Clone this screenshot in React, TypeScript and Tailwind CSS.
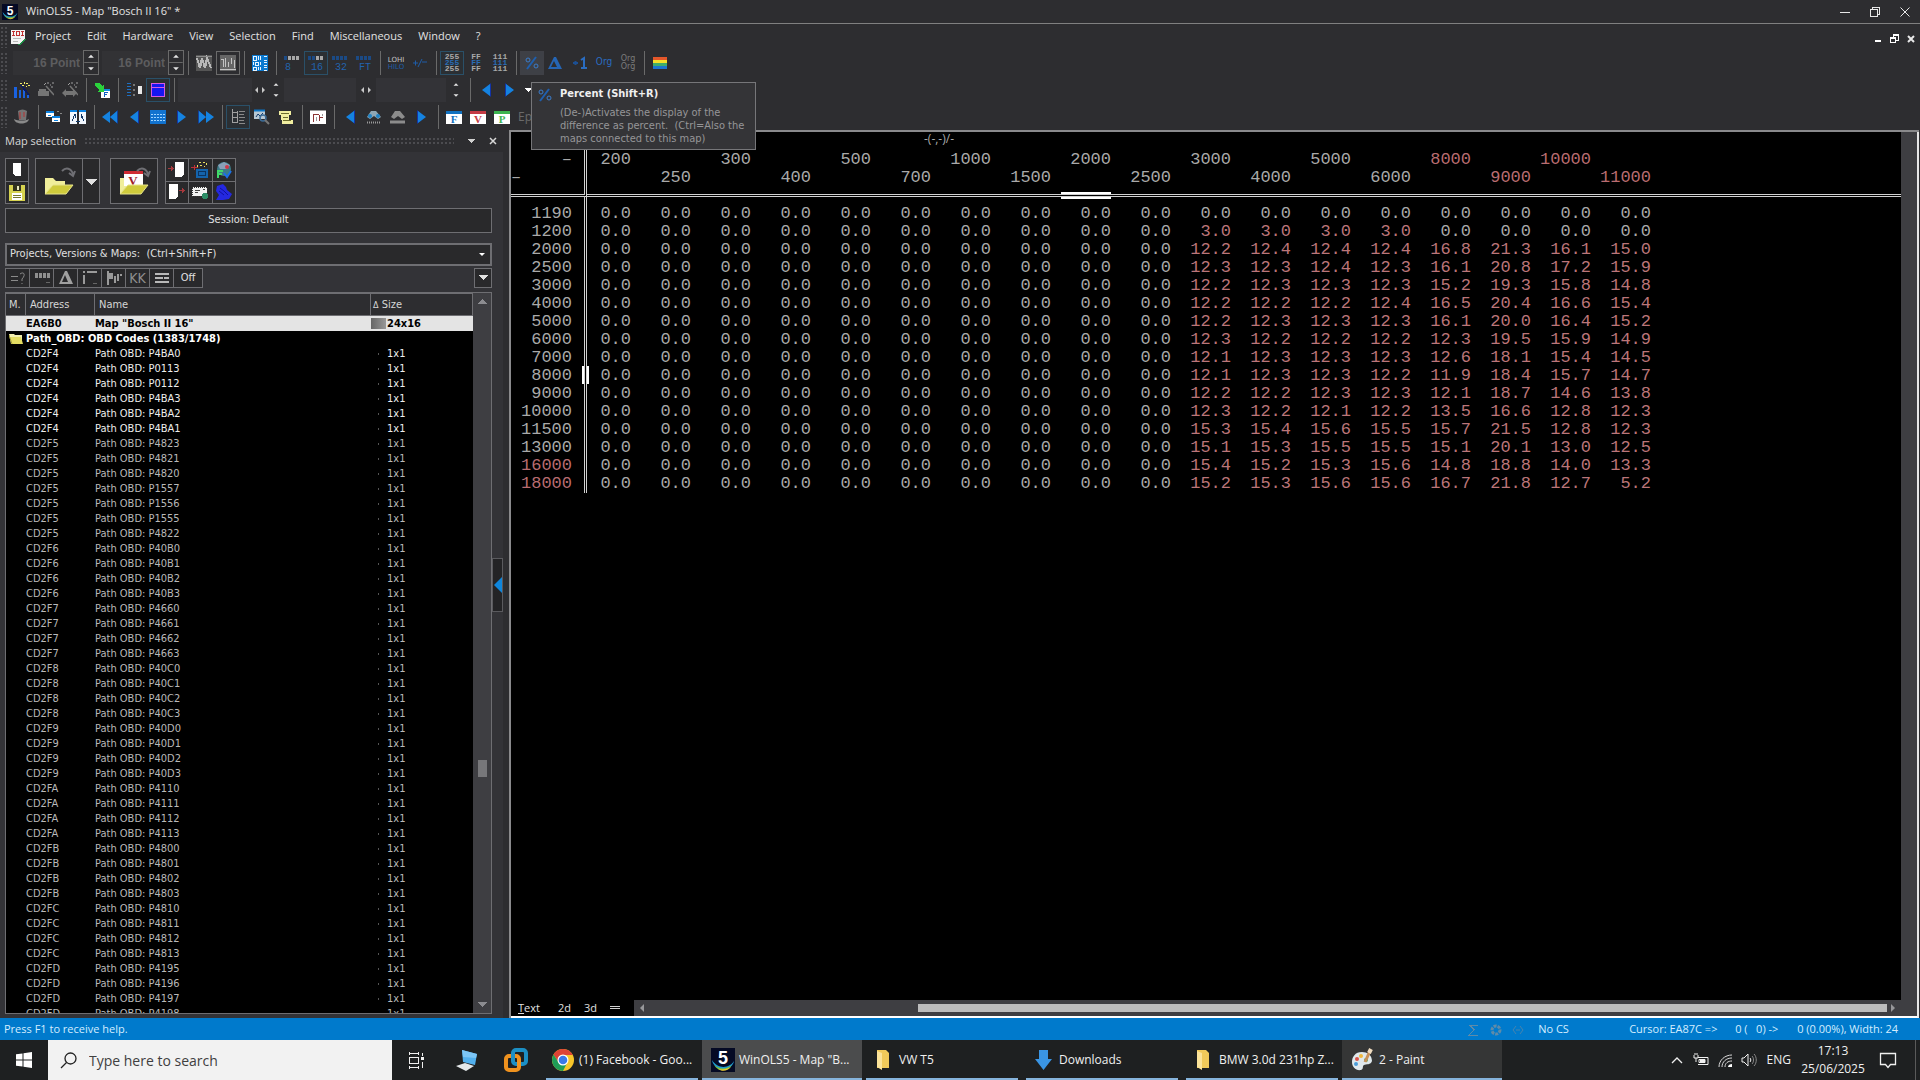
import React from 'react';
import clsx from 'clsx';

const MENU = ['Project', 'Edit', 'Hardware', 'View', 'Selection', 'Find', 'Miscellaneous', 'Window', '?'];

const OBD_GROUPS = [
  { address: 'CD2F4', codes: ['P4BA0', 'P0113', 'P0112', 'P4BA3', 'P4BA2', 'P4BA1'], bright: true },
  { address: 'CD2F5', codes: ['P4823', 'P4821', 'P4820', 'P1557', 'P1556', 'P1555', 'P4822'] },
  { address: 'CD2F6', codes: ['P40B0', 'P40B1', 'P40B2', 'P40B3'] },
  { address: 'CD2F7', codes: ['P4660', 'P4661', 'P4662', 'P4663'] },
  { address: 'CD2F8', codes: ['P40C0', 'P40C1', 'P40C2', 'P40C3'] },
  { address: 'CD2F9', codes: ['P40D0', 'P40D1', 'P40D2', 'P40D3'] },
  { address: 'CD2FA', codes: ['P4110', 'P4111', 'P4112', 'P4113'] },
  { address: 'CD2FB', codes: ['P4800', 'P4801', 'P4802', 'P4803'] },
  { address: 'CD2FC', codes: ['P4810', 'P4811', 'P4812', 'P4813'] },
  { address: 'CD2FD', codes: ['P4195', 'P4196', 'P4197', 'P4198'] },
];

const X_AXIS = [
  200, 250, 300, 400, 500, 700, 1000, 1500, 2000, 2500, 3000, 4000, 5000, 6000, 8000, 9000, 10000, 11000,
];

const Y_AXIS = [
  1190, 1200, 2000, 2500, 3000, 4000, 5000, 6000, 7000, 8000, 9000, 10000, 11500, 13000, 16000, 18000,
];

// the first ten columns have no difference, only the last eight are listed
const DIFF = [
  '0.0 0.0 0.0 0.0 0.0 0.0 0.0 0.0',
  '3.0 3.0 3.0 3.0 0.0 0.0 0.0 0.0',
  '12.2 12.4 12.4 12.4 16.8 21.3 16.1 15.0',
  '12.3 12.3 12.4 12.3 16.1 20.8 17.2 15.9',
  '12.2 12.3 12.3 12.3 15.2 19.3 15.8 14.8',
  '12.2 12.2 12.2 12.4 16.5 20.4 16.6 15.4',
  '12.2 12.3 12.3 12.3 16.1 20.0 16.4 15.2',
  '12.3 12.2 12.2 12.2 12.3 19.5 15.9 14.9',
  '12.1 12.3 12.3 12.3 12.6 18.1 15.4 14.5',
  '12.1 12.3 12.3 12.2 11.9 18.4 15.7 14.7',
  '12.2 12.2 12.3 12.3 12.1 18.7 14.6 13.8',
  '12.3 12.2 12.1 12.2 13.5 16.6 12.8 12.3',
  '15.3 15.4 15.6 15.5 15.7 21.5 12.8 12.3',
  '15.1 15.3 15.5 15.5 15.1 20.1 13.0 12.5',
  '15.4 15.2 15.3 15.6 14.8 18.8 14.0 13.3',
  '15.2 15.3 15.6 15.6 16.7 21.8 12.7 5.2',
].map((row) => [...Array(10).fill('0.0'), ...row.split(' ')]);

const CURSOR_COLUMN = 8;
const CURSOR_ROW = 9;

type IconProps = { children: React.ReactNode; size?: number; box?: number; smooth?: boolean };

const Icon = ({ children, size = 16, box = 16, smooth }: IconProps) => (
  <svg
    width={size}
    height={size}
    viewBox={`0 0 ${box} ${box}`}
    shapeRendering={smooth ? 'auto' : 'crispEdges'}
    fill="none"
    aria-hidden="true"
  >
    {children}
  </svg>
);

const Tool = ({
  label,
  active,
  children,
}: {
  label: string;
  active?: 'blue' | 'gray' | 'hover';
  children: React.ReactNode;
}) => (
  <button
    aria-label={label}
    className={clsx(
      'flex h-6 w-6 shrink-0 items-center justify-center border',
      !active && 'border-transparent',
      active === 'blue' && 'border-[#2a5068] bg-[#2b2f33]',
      active === 'gray' && 'border-[#6b6b6b]',
      active === 'hover' && 'border-[#3f4046] bg-[#3e4046]',
    )}
  >
    {children}
  </button>
);

const Separator = () => (
  <div className="flex w-2 shrink-0 justify-center">
    <div className="h-6 w-px bg-[#6a6a6a]" />
  </div>
);

const ToolbarRow = ({ children, label }: { children: React.ReactNode; label: string }) => (
  <div role="toolbar" aria-label={label} className="flex h-[27px] items-center">
    <Grip className="mr-[2px] h-[22px] w-2" />
    {children}
  </div>
);

const Grip = ({ className }: { className: string }) => (
  <div
    className={clsx(
      'bg-[radial-gradient(#4c4c50_1px,transparent_1px)] bg-[size:4px_4px]',
      className,
    )}
  />
);

const Spinner = ({ boxed }: { boxed?: boolean }) => (
  <svg
    className={clsx('shrink-0', boxed && 'border border-[#6a6a6a]')}
    width="16"
    height={boxed ? 25 : 20}
    viewBox="0 0 14 24"
    aria-hidden="true"
  >
    {boxed && <path d="M0 12h14" stroke="#6a6a6a" />}
    <path d="M7 4l3 3H4zM7 20l3-3H4z" fill="#e4e4e4" />
  </svg>
);

const LeftRight = () => (
  <svg className="shrink-0" width="14" height="10" viewBox="0 0 14 10" aria-hidden="true">
    <path d="M5 2v6L2 5zM9 2v6l3-3z" fill="#c8c8c8" />
  </svg>
);

const Play = ({ back, double }: { back?: boolean; double?: boolean }) => (
  <Icon smooth>
    <g transform={back ? 'translate(16 0) scale(-1 1)' : undefined}>
      {double ? (
        <>
          <path d="M0 1v14l8-7z" fill="#123f9c" />
          <path d="M1 2v12l7-6zM8 2v12l8-6z" fill="#1583e0" />
        </>
      ) : (
        <>
          <path d="M3 1v14l8-7z" fill="#1234a8" />
          <path d="M4 2v12l8-6z" fill="#1583e0" />
        </>
      )}
    </g>
  </Icon>
);

const BitsIcon = ({ text, on }: { text: string; on: number }) => (
  <Icon size={18} box={18}>
    {[0, 1, 2, 3].map((i) => (
      <rect key={i} x={1 + i * 4} y="2" width="3" height="4" fill={i < on ? '#1b4a85' : '#a8a8a8'} />
    ))}
    <text x={text.length > 1 ? 4 : 2} y="16" fontSize="10" fontFamily="Liberation Mono" fill="#2263ae">
      {text}
    </text>
  </Icon>
);

const RadixIcon = ({ lines, middle }: { lines: string; middle: string }) => (
  <Icon size={20} box={20} smooth>
    {[6, 12, 18].map((y, i) => (
      <text
        key={y}
        x="10"
        y={y}
        textAnchor="middle"
        fontSize="8"
        fontWeight="bold"
        fontFamily="Liberation Mono"
        fill={i === 1 ? middle : '#a9a9a9'}
      >
        {lines}
      </text>
    ))}
  </Icon>
);

const LetterIcon = ({ letter, color }: { letter: string; color: string }) => (
  <Icon>
    <rect x="0" y="2" width="16" height="13" fill="#fff" />
    <rect x="0" y="2" width="16" height="3" fill={color} />
    <text x="8" y="14" textAnchor="middle" fontSize="11" fontWeight="bold" fontFamily="Liberation Serif" fill={color}>
      {letter}
    </text>
  </Icon>
);

const WandIcon = ({ color, swap }: { color: string; swap?: boolean }) => (
  <Icon smooth>
    {swap ? (
      <path d="M0 11l4-4v2h7V7l4 4-4 4v-2H4v2z" fill={color} />
    ) : (
      <path d="M0 9h11v5H0zM1 7h7v2H1z" fill={color} />
    )}
    <path d="M8 4l8 9" stroke={color} strokeWidth="1.500" />
    <path d="M6 3l2-2M9 1h2M12 3h1M14 1h2M13 5h2" stroke="#a0a0a0" />
  </Icon>
);

const PercentIcon = () => (
  <Icon smooth>
    <path d="M12 2L3 14" stroke="#1f5fae" strokeWidth="2" />
    <circle cx="4" cy="5" r="2" stroke="#3b7ccb" />
    <circle cx="12" cy="11" r="2" stroke="#3b7ccb" />
  </Icon>
);

const WinOlsIcon = ({ size }: { size: number }) => (
  <Icon size={size} box={24} smooth>
    <rect width="24" height="24" fill="#050a24" />
    <path d="M1 12c2 12 20 12 22 1-4 7-16 9-22-1z" fill="#1f9ad0" />
    <path d="M3 17c4 7 14 7 18 0-5 4-12 5-18 0z" fill="#7fc742" />
    <path d="M7 21c4 3 10 2 13-2-4 2-8 3-13 2z" fill="#f0c832" />
    <text x="12" y="16" textAnchor="middle" fontSize="18" fontWeight="bold" fontFamily="Liberation Sans" fill="#fff">
      5
    </text>
  </Icon>
);

const TitleBar = () => (
  <header className="flex h-6 items-center border-b border-[#808080] bg-[#2d2d30] pr-[10px] pl-[2px]">
    <WinOlsIcon size={16} />
    <h1 className="ml-2 text-[#e2e2e2]">WinOLS5 - Map "Bosch II 16" *</h1>
    <div className="ml-auto flex items-center gap-5">
      <button aria-label="Minimize">
        <Icon size={10} box={10}>
          <path d="M0 5.500h10" stroke="#e8e8e8" />
        </Icon>
      </button>
      <button aria-label="Restore">
        <Icon size={10} box={10}>
          <path d="M.5 2.500h7v7h-7zM2.500 2V.5h7v7H8" stroke="#e8e8e8" />
        </Icon>
      </button>
      <button aria-label="Close">
        <Icon size={10} box={10} smooth>
          <path d="M.5.5l9 9M9.500.5l-9 9" stroke="#e8e8e8" />
        </Icon>
      </button>
    </div>
  </header>
);

const MenuBar = () => (
  <nav className="flex h-[25px] items-center pr-[5px] text-[#e2e2e2]">
    <Grip className="h-[22px] w-2" />
    <div className="mr-[9px] ml-[2px]">
      <Icon>
        <path d="M1 1h14v9l-5 5H1z" fill="#f4f4f4" />
        <path d="M3.500 2v5M2 2.500h3M2 6.500h3M6.500 2.500h3v4h-3zM12.500 2v5M11 2.500h3M11 6.500h3" stroke="#c03030" />
        <path d="M3 9.500h8M3 12.500h5" stroke="#b8b8b8" />
        <path d="M15 9.500v1l-5 5H8" stroke="#1d8b44" />
      </Icon>
    </div>
    <ul className="flex gap-4">
      {MENU.map((item) => (
        <li key={item}>
          <button>{item}</button>
        </li>
      ))}
    </ul>
    <div className="ml-auto flex items-center gap-2 pt-1">
      <button aria-label="Minimize map window">
        <Icon size={8} box={8}>
          <path d="M1 6h6" stroke="#fff" strokeWidth="2" />
        </Icon>
      </button>
      <button aria-label="Restore map window">
        <Icon size={9} box={9}>
          <path d="M.5 4.500h5v4h-5zM3 3V1h5v5H6" stroke="#fff" />
          <path d="M0 4h6M3 1h6" stroke="#fff" strokeWidth="2" />
        </Icon>
      </button>
      <button aria-label="Close map window">
        <Icon size={8} box={8} smooth>
          <path d="M1 1l6 6M7 1L1 7" stroke="#e8e8e8" strokeWidth="2" />
        </Icon>
      </button>
    </div>
  </nav>
);

const pointInput =
  'h-6 min-w-0 shrink-0 bg-[#323235] pr-[3px] text-right font-[Liberation_Sans,sans-serif] text-xs font-bold text-[#5d5d5f]';
const plainInput = 'h-6 min-w-0 shrink-0 bg-[#333337]';

const Toolbars = () => (
  <div className="text-[#8a8a8a]">
    <ToolbarRow label="View">
      <input aria-label="Font size" defaultValue="16 Point" className={clsx(pointInput, 'ml-[3px] w-[70px]')} />
      <Spinner boxed />
      <input aria-label="Axis font size" defaultValue="16 Point" className={clsx(pointInput, 'ml-[3px] w-[66px]')} />
      <Spinner boxed />
      <Separator />
      <Tool label="Signed curve">
        <Icon>
          <rect width="16" height="16" fill="#555" />
          <path d="M1 3l3 10 2-10 3 10 2-10 4 10" stroke="#b9b9b9" strokeWidth="2" />
          <path d="M0 1h16" stroke="#8d8d8d" />
        </Icon>
      </Tool>
      <Tool label="Bar curve" active="gray">
        <Icon>
          <rect width="16" height="16" fill="#666" />
          <path d="M1 4h2v8M5 3v9M8 7v5M11 3v6M14 5v8M0 14h16" stroke="#c4c4c4" />
        </Icon>
      </Tool>
      <Separator />
      <Tool label="Hexdump">
        <Icon>
          <rect width="16" height="16" fill="#0b79cf" />
          <path
            d="M1 1h3v4H1zM6 1v4M8 1v4M1 7v3M3 7h3v3H3zM8 7v3M1 12h3v3H1zM6 12v3M8 12v3M12 1h3M12 5h3M12 7h3M12 10h3M12 12h3M12 15h3"
            stroke="#e8f4ff"
          />
        </Icon>
      </Tool>
      <Separator />
      <Tool label="8 bit"><BitsIcon text="8" on={1} /></Tool>
      <Tool label="16 bit" active="blue"><BitsIcon text="16" on={2} /></Tool>
      <Tool label="32 bit"><BitsIcon text="32" on={4} /></Tool>
      <Tool label="Float"><BitsIcon text="FT" on={4} /></Tool>
      <Separator />
      <Tool label="Low High">
        <Icon size={20} box={20} smooth>
          <text x="10" y="9" textAnchor="middle" fontSize="7" fontFamily="DejaVu Sans" fill="#c4c4c4">LOHI</text>
          <text x="10" y="16" textAnchor="middle" fontSize="7" fontFamily="DejaVu Sans" fill="#1f5da8">HILO</text>
        </Icon>
      </Tool>
      <Tool label="Sign">
        <Icon smooth>
          <path d="M1 8h5M3.500 5.500v5M6 12l4-8M10 7h5" stroke="#1f5da8" />
        </Icon>
      </Tool>
      <Separator />
      <Tool label="Decimal" active="blue"><RadixIcon lines="255" middle="#2a6cb4" /></Tool>
      <Tool label="Hexadecimal"><RadixIcon lines="FF" middle="#2a6cb4" /></Tool>
      <Tool label="Binary"><RadixIcon lines="111" middle="#2a6cb4" /></Tool>
      <Separator />
      <Tool label="Percent" active="hover"><PercentIcon /></Tool>
      <Tool label="Difference">
        <Icon smooth>
          <path d="M6 2h2l6 12H0zM6 6l-3 6h6z" fill="#2565b4" fillRule="evenodd" />
        </Icon>
      </Tool>
      <Tool label="Plus one">
        <Icon smooth>
          <path d="M1 8h5M3.500 6v4" stroke="#1c4f92" strokeWidth="2" />
          <path d="M9 5l3-2v10M9 13h6" stroke="#2a6cc0" strokeWidth="2" />
        </Icon>
      </Tool>
      <Tool label="Original">
        <Icon size={20} box={20} smooth>
          <text x="10" y="12" textAnchor="middle" fontSize="10" fontFamily="DejaVu Sans Condensed" fill="#2a6cc0">Org</text>
        </Icon>
      </Tool>
      <Tool label="Original values">
        <Icon size={18} box={18} smooth>
          <text x="9" y="7" textAnchor="middle" fontSize="8" fontFamily="DejaVu Sans" fill="#7c7c7c">Org</text>
          <text x="9" y="15" textAnchor="middle" fontSize="8" fontFamily="DejaVu Sans" fill="#7c7c7c">Org</text>
        </Icon>
      </Tool>
      <Separator />
      <Tool label="Colors">
        <Icon>
          <path d="M1 3.500h14" stroke="#e4572a" strokeWidth="3" />
          <path d="M1 6.500h14" stroke="#f4e02a" strokeWidth="3" />
          <path d="M1 9.500h14" stroke="#3fae6a" strokeWidth="3" />
          <path d="M1 12.500h14" stroke="#1b76d0" strokeWidth="3" />
        </Icon>
      </Tool>
    </ToolbarRow>

    <ToolbarRow label="Values">
      <Tool label="Map wizard">
        <Icon>
          <path d="M0 5h3v11H0zM5 8h2v8H5zM9 7h2v9H9zM13 11h2v5h-2z" fill="#1a62e0" />
          <path d="M7 3l8 10" stroke="#0c1c60" strokeWidth="2" />
          <path d="M6 1h2v1H6zM10 0h1v2h-1zM8 3h2v1H8zM12 1h2v1h-2zM14 3h2v1h-2zM12 4h1v1h-1z" fill="#f2ec6a" />
        </Icon>
      </Tool>
      <Tool label="Project wizard"><WandIcon color="#757575" /></Tool>
      <Tool label="Version wizard"><WandIcon color="#757575" swap /></Tool>
      <Separator />
      <Tool label="Import file">
        <Icon>
          <rect x="7" y="7" width="9" height="9" fill="#fff" />
          <path d="M7 7.500h9" stroke="#0f8fe0" strokeWidth="2" />
          <path d="M10 10h4M10.500 10v5M10 12h3" stroke="#0f60c0" />
          <path d="M1 1h4l3 3 2-2v8H3l2-2-4-4z" fill="#2bd23c" />
        </Icon>
      </Tool>
      <Separator />
      <Tool label="Columns">
        <Icon>
          <path d="M1 1.500h4M1 4.500h4M1 7.500h4M1 10.500h4M1 13.500h4" stroke="#1f6fc0" />
          <path d="M8 2v2M8 7v2M8 12v2" stroke="#777" strokeWidth="2" />
          <rect x="12" y="4" width="4" height="8" fill="#e8e8e8" />
        </Icon>
      </Tool>
      <Tool label="Window layout" active="blue">
        <Icon>
          <rect x="1.500" y="1.500" width="13" height="13" fill="#1616f0" stroke="#d65ae0" />
          <path d="M1 5.500h14" stroke="#d65ae0" />
        </Icon>
      </Tool>
      <Separator />
      <input aria-label="Column value" className={clsx(plainInput, 'w-[74px]')} />
      <div className="flex w-8 items-center justify-end gap-px">
        <LeftRight />
        <Spinner />
      </div>
      <input aria-label="Row value" className={clsx(plainInput, 'w-[72px]')} />
      <div className="flex w-5 justify-center">
        <LeftRight />
      </div>
      <input aria-label="Cell value" className={clsx(plainInput, 'w-[70px]')} />
      <div className="flex w-5 justify-center">
        <Spinner />
      </div>
      <Separator />
      <Tool label="Previous"><Play back /></Tool>
      <Tool label="Next"><Play /></Tool>
      <Icon size={12} box={12}>
        <path d="M3 4h7L6.500 8z" fill="#fff" />
      </Icon>
    </ToolbarRow>

    <ToolbarRow label="Navigation">
      <Tool label="Expert">
        <Icon smooth>
          <path d="M4 2c3-2 6-2 9 0l-1 9H5z" fill="#757575" />
          <path d="M0 10c1 6 14 6 15 0-4 2-11 2-15 0z" fill="#8a8a8a" />
          <path d="M6 3v7M10 3v5" stroke="#a04848" strokeWidth="1.500" />
        </Icon>
      </Tool>
      <Separator />
      <Tool label="Link windows">
        <Icon>
          <rect x="0" y="2" width="8" height="6" fill="#fff" />
          <rect x="6" y="7" width="8" height="6" fill="#fff" />
          <path d="M0 3h8M6 8h8" stroke="#0c84e4" strokeWidth="2" />
          <path d="M2 6.500h3M8 11.500h4" stroke="#0c84e4" />
          <path d="M11 2.500h2M14 4.500h2" stroke="#888" />
        </Icon>
      </Tool>
      <Tool label="Compare windows">
        <Icon>
          <path d="M0 1h7v14H0zM9 1h7v14H9z" fill="#f2f8ff" />
          <path d="M0 1.500h7M9 1.500h7" stroke="#0c84e4" strokeWidth="2" />
          <path d="M2 12l3-7M5 5v4M14 12l-3-7M11 5v4M6 12h4" stroke="#123a6a" />
        </Icon>
      </Tool>
      <Separator />
      <Tool label="First map"><Play back double /></Tool>
      <Tool label="Previous map"><Play back /></Tool>
      <Tool label="Map list">
        <Icon>
          <rect y="1" width="16" height="14" fill="#1273cf" />
          <path d="M1 5.500h14M1 8.500h14M1 11.500h14" stroke="#9fd4ff" strokeDasharray="2 1" />
        </Icon>
      </Tool>
      <Tool label="Next map"><Play /></Tool>
      <Tool label="Last map"><Play double /></Tool>
      <Separator />
      <Tool label="Tree" active="blue">
        <Icon>
          <path d="M2.500 0v13M2 3.500h5M2 8.500h5M2 13.500h5M7.500 2v12" stroke="#a0a0a0" />
          <path d="M9 2.500h6M9 5.500h5M9 8.500h6M9 11.500h5M9 14.500h6" stroke="#8a8a8a" />
        </Icon>
      </Tool>
      <Tool label="Preview">
        <Icon smooth>
          <path d="M0 1h11v9H0z" fill="#b8c8d4" />
          <path d="M0 1.500h11" stroke="#0c74c4" strokeWidth="2" />
          <path d="M2 8l2-3 2 2 3-3" stroke="#123a6a" />
          <circle cx="9" cy="9" r="3" stroke="#3c6c98" strokeWidth="1.500" />
          <path d="M11 11l4 4" stroke="#777" strokeWidth="2" />
        </Icon>
      </Tool>
      <Tool label="Notes">
        <Icon>
          <path d="M1 2h12v4h-2v5h4v4H4v-4H3V6H1z" fill="#f1eea0" />
          <path d="M3 4.500h8M5 8.500h5M5 11.500h8" stroke="#6c6c2c" />
        </Icon>
      </Tool>
      <Separator />
      <Tool label="Axis table">
        <Icon>
          <rect x="0" y="1" width="16" height="14" fill="#fff" />
          <path d="M0 1.500h16" stroke="#999" />
          <path d="M3.500 5v8M3 5.500h6M9.500 6v6M9 8.500h4" stroke="#8c3434" />
          <path d="M6.500 8v4M12.500 5v2" stroke="#999" />
        </Icon>
      </Tool>
      <Separator />
      <Tool label="Find previous"><Play back /></Tool>
      <Tool label="Find">
        <Icon smooth>
          <path d="M1 8l4-6h5l5 6-3 2-4-3-4 3z" fill="#8fa6b4" />
          <circle cx="4" cy="7" r="2" fill="#1e82c4" />
          <circle cx="12" cy="7" r="2" fill="#1e82c4" />
          <path d="M1 13.500h14" stroke="#9a9a9a" strokeWidth="2" strokeDasharray="1 1" />
        </Icon>
      </Tool>
      <Tool label="Find maps">
        <Icon smooth>
          <path d="M1 8l4-6h5l5 6-3 2-4-3-4 3z" fill="#8c8c8c" />
          <path d="M0 13h15" stroke="#8c8c8c" strokeWidth="3" />
        </Icon>
      </Tool>
      <Tool label="Find next"><Play /></Tool>
      <Separator />
      <Tool label="Folder"><LetterIcon letter="F" color="#1272c0" /></Tool>
      <Tool label="Version"><LetterIcon letter="V" color="#c43a44" /></Tool>
      <Tool label="Project"><LetterIcon letter="P" color="#3cb450" /></Tool>
      <button className="ml-1 text-xs text-[#6a6a6a]">Epk</button>
    </ToolbarRow>
  </div>
);

const Tooltip = () => (
  <div
    role="tooltip"
    className="absolute top-[82px] left-[531px] z-10 flex w-[225px] gap-[7px] border border-[#767679] bg-[#343437] py-1 pl-[5px]"
  >
    <div className="shrink-0">
      <PercentIcon />
    </div>
    <div className="w-[190px] font-[DejaVu_Sans_Condensed,sans-serif] whitespace-nowrap text-[#969698]">
      <p className="leading-[14px] font-bold text-[#f0f0f0]">Percent (Shift+R)</p>
      <p className="pt-[5px] leading-[13px]">
        (De-)Activates the display of the
        <br />
        difference as percent.&nbsp; (Ctrl=Also the
        <br />
        maps connected to this map)
      </p>
    </div>
  </div>
);

const panelButton = 'flex items-center justify-center border border-[#6e6e72] bg-[#29292b]';

const FolderDrawing = ({ version }: { version?: boolean }) => (
  <Icon size={36} box={36} smooth>
    <path d="M4 15h8l3 3h9v5L12 31H4z" fill="#f0ee9a" />
    {version && (
      <>
        <path d="M8 9h19v14H8z" fill="#fff" />
        <path d="M8 9.500h19" stroke="#d02c34" strokeWidth="3" />
        <text x="17" y="22" textAnchor="middle" fontSize="13" fontWeight="bold" fontFamily="Liberation Serif" fill="#a02028">
          V
        </text>
      </>
    )}
    <path d="M4 31l8-9h20l-7 9z" fill="#cfcb3c" stroke="#e6e38a" />
    <path d="M21 8c4-4 9-3 11 3M28 10l4 3 2-5" stroke="#6f6f74" strokeWidth="2" />
  </Icon>
);

const DocIcon = ({ arrow }: { arrow?: 'in' | 'out' }) => (
  <Icon size={18} box={18}>
    <path d={arrow === 'out' ? 'M1 1h9v12l-3 3H1z' : 'M7 1h9v12l-3 3H7z'} fill="#fff" />
    {arrow === 'in' && <path d="M0 7.500h6M3 5v5M4 6v3" stroke="#a8383c" />}
    {arrow === 'out' && <path d="M11 7.500h6M14 5v5M15 6v3" stroke="#a8383c" />}
  </Icon>
);

const PanelButtons = () => (
  <div className="flex h-[46px]">
    <div className="flex w-6 flex-col">
      <button aria-label="New project" className={clsx(panelButton, 'h-6')}>
        <Icon>
          <path d="M4 1h8v13H6l-2-2z" fill="#fff" />
        </Icon>
      </button>
      <button aria-label="Save" className={clsx(panelButton, '-mt-px h-[23px]')}>
        <Icon>
          <path d="M0 0h15l1 1v15H0z" fill="#d6d250" />
          <path d="M4 0h8v6H4z" fill="#33331c" />
          <path d="M8 1h2v4H8z" fill="#e8e8c0" />
          <path d="M3 8h10v7H3z" fill="#fff" />
          <path d="M4 10.500h8M4 12.500h8" stroke="#77772c" />
        </Icon>
      </button>
    </div>
    <button aria-label="Open project" className={clsx(panelButton, 'ml-[6px] w-12')}>
      <FolderDrawing />
    </button>
    <button aria-label="Recent projects" className={clsx(panelButton, '-ml-px w-[18px]')}>
      <Icon size={12} box={12}>
        <path d="M0 4h12L6 10z" fill="#e0e0e0" />
      </Icon>
    </button>
    <button aria-label="Open version" className={clsx(panelButton, 'ml-[10px] w-12')}>
      <FolderDrawing version />
    </button>
    <div className="ml-[7px] grid w-[71px] grid-cols-3 border-t border-l border-[#6e6e72] bg-[#29292b] *:flex *:items-center *:justify-center *:border-r *:border-b *:border-[#6e6e72]">
      <button aria-label="Import"><DocIcon arrow="in" /></button>
      <button aria-label="Import hardware">
        <Icon size={18} box={18}>
          <path d="M5 8h12v9H5z" fill="#1464ac" />
          <path d="M7.500 10.500h7v4h-7z" stroke="#0c3460" />
          <path d="M0 6.500h7M3.500 4v5" stroke="#c03038" />
          <path d="M6 4h1v2H6zM8 1h2v1H8zM12 1h2v1h-2zM15 2h1v2h-1zM9 4h2v1H9zM13 5h1v1h-1z" fill="#e8e060" />
        </Icon>
      </button>
      <button aria-label="Import online">
        <Icon size={18} box={18} smooth>
          <circle cx="9" cy="8" r="7" fill="#3c7c88" />
          <path d="M3 4l6-3 6 3-3 4H5z" fill="#8aa0b8" />
          <path d="M3 17v-7h5M3 13h4" stroke="#40d868" strokeWidth="2" />
          <circle cx="12" cy="6" r="2" fill="#d03848" />
          <path d="M9 12l3 4 4-6" stroke="#1b70e8" strokeWidth="2" />
        </Icon>
      </button>
      <button aria-label="Export"><DocIcon arrow="out" /></button>
      <button aria-label="Send mail">
        <Icon size={18} box={18}>
          <path d="M1 4h15v9H1z" fill="#f2f2f2" />
          <path d="M1 4h15v9H1z" stroke="#333" strokeDasharray="1 1" />
          <path d="M4 7.500h5M4 9.500h3M12 6.500h2" stroke="#444" />
          <circle cx="14" cy="13" r="3" fill="#2c8c66" />
        </Icon>
      </button>
      <button aria-label="Plugins">
        <Icon size={18} box={18} smooth>
          <path d="M2 3l6-2 3 3 1 3 5 4-3 5-6 1H1l3-5-3-4z" fill="#2428e0" />
          <path d="M5 5l4 3 4 4M4 8l5 4" stroke="#1010a0" />
        </Icon>
      </button>
    </div>
  </div>
);

const FilterBar = () => (
  <div className="mt-[2px] flex h-5 shrink-0">
    <div className="flex *:flex *:w-[24px] *:items-center *:justify-center *:border *:border-r-0 *:border-[#6e6e72] *:bg-[#29292b]">
      <button aria-label="Equals filter">
        <Icon smooth>
          <path d="M1 6.500h7M1 10.500h7M10 4c4-3 6 1 2 5v2M12 13v1" stroke="#8a8a8a" />
        </Icon>
      </button>
      <button aria-label="Size filter">
        <Icon>
          <path d="M1 3h3v5H1zM5 3h3v5H5zM9 3h3v5H9zM13 3h3v5h-3z" fill="#8f8f8f" />
          <path d="M12 12h4" stroke="#666" />
        </Icon>
      </button>
      <button aria-label="Difference filter">
        <Icon smooth>
          <path d="M7 1h2l6 13H1zM7 5l-3 7h6z" fill="#a0a0a0" fillRule="evenodd" />
        </Icon>
      </button>
      <button aria-label="Axis filter">
        <Icon>
          <path d="M2 1v2M5 2h10M2 5v9" stroke="#9a9a9a" strokeWidth="2" />
          <path d="M11 13h4" stroke="#666" />
        </Icon>
      </button>
      <button aria-label="Curve filter">
        <Icon>
          <path d="M1 1h2v14H1zM3 3h4v6H3zM8 6h2v7H8zM11 4h2v7h-2zM14 4h2v2h-2z" fill="#9a9a9a" />
        </Icon>
      </button>
      <button aria-label="KK filter" className="text-sm text-[#8f8f8f]">KK</button>
      <button aria-label="List filter">
        <Icon>
          <path d="M1 4h14M1 8h8M10 8h5M1 12h14" stroke="#b8b8b8" strokeWidth="2" />
        </Icon>
      </button>
    </div>
    <button className={clsx(panelButton, 'w-[30px] text-[#e0e0e0]')}>Off</button>
    <button aria-label="More filters" className={clsx(panelButton, 'ml-auto w-[18px]')}>
      <Icon size={12} box={12}>
        <path d="M1 3h10L6 8z" fill="#e0e0e0" />
      </Icon>
    </button>
  </div>
);

const YellowFolder = () => (
  <Icon size={14} box={14} smooth>
    <path d="M0 2h5l1 1h7v9H2z" fill="#f2efb0" />
    <path d="M3 12L1 5h11l2 7z" fill="#e3dc62" />
    <path d="M0 3l3 9" stroke="#a39c30" />
  </Icon>
);

const MapList = () => (
  <div className="mt-1 flex min-h-0 flex-1 border border-[#6e6e72] bg-black">
    <div className="min-h-0 flex-1 overflow-hidden">
      <table className="w-full table-fixed border-separate border-spacing-0 text-left leading-[15px] whitespace-nowrap">
        <colgroup>
          <col className="w-5" />
          <col className="w-[69px]" />
          <col />
          <col className="w-[102px]" />
        </colgroup>
        <thead>
          <tr className="h-[23px] bg-[#2d2d30] text-[#d6d6d6] *:border *:border-l-0 *:border-[#6e6e72] *:font-normal">
            <th className="pl-[3px]">M.</th>
            <th className="pl-1">Address</th>
            <th className="pl-1">Name</th>
            <th className="pl-[2px]">
              <span className="text-[9px]">Δ</span> Size
            </th>
          </tr>
        </thead>
        <tbody>
          <tr className="h-[15px] bg-[#e4e4e4] font-bold text-black">
            <td />
            <td>EA6B0</td>
            <td>Map "Bosch II 16"</td>
            <td>
              <div className="flex items-center gap-px">
                <div className="h-[11px] w-[15px] bg-linear-to-r from-[#666] to-[#999]" />
                24x16
              </div>
            </td>
          </tr>
          <tr className="h-[15px] font-bold text-white">
            <td className="pl-[3px]">
              <YellowFolder />
            </td>
            <td colSpan={3}>Path_OBD: OBD Codes (1383/1748)</td>
          </tr>
          {OBD_GROUPS.map((group) =>
            group.codes.map((code) => (
              <tr key={code} className={clsx('h-[15px]', group.bright ? 'text-[#eeeeee]' : 'text-[#b9b9b9]')}>
                <td />
                <td>{group.address}</td>
                <td>Path OBD: {code}</td>
                <td>
                  <div className="flex items-center gap-2 pl-[7px]">
                    <div className="h-[2px] w-px bg-[#555]" />
                    1x1
                  </div>
                </td>
              </tr>
            )),
          )}
        </tbody>
      </table>
    </div>
    <div className="relative flex w-[18px] flex-col items-center justify-between bg-[#3e3e42] py-1">
      <Icon size={10} box={10}>
        <path d="M0 7h10L5 2z" fill="#8c8c90" />
      </Icon>
      <div className="absolute top-[467px] h-[17px] w-[9px] bg-[#77777a]" />
      <Icon size={10} box={10}>
        <path d="M0 3h10L5 8z" fill="#8c8c90" />
      </Icon>
    </div>
  </div>
);

const MapSelection = () => (
  <aside className="flex w-[509px] shrink-0 flex-col">
    <div className="flex h-[22px] shrink-0 items-center pr-3 pl-[5px]">
      <h2 className="text-[#d8d8d8]">Map selection</h2>
      <Grip className="mr-1 ml-2 h-2 flex-1" />
      <button aria-label="Panel menu" className="mr-[13px] ml-2">
        <Icon size={10} box={10}>
          <path d="M1 3h8L5 7z" fill="#d0d0d0" />
        </Icon>
      </button>
      <button aria-label="Close panel">
        <Icon size={8} box={8} smooth>
          <path d="M1 1l6 6M7 1L1 7" stroke="#d8d8d8" strokeWidth="1.500" />
        </Icon>
      </button>
    </div>
    <div className="flex min-h-0 flex-1">
      <div className="flex min-w-0 flex-1 flex-col bg-[#333337] pt-[6px] pb-1 pl-[5px] font-[DejaVu_Sans_Condensed,sans-serif]">
        <PanelButtons />
        <button className={clsx(panelButton, 'mt-1 h-[25px] shrink-0 text-[#e0e0e0]')}>Session: Default</button>
        <div className="relative mt-[10px]">
          <select
            aria-label="Projects, Versions & Maps"
            className="block h-[23px] w-full appearance-none border-2 border-[#6e6e72] bg-[#29292b] pl-[3px] text-[#e0e0e0]"
          >
            <option>Projects, Versions & Maps:&nbsp; (Ctrl+Shift+F)</option>
          </select>
          <svg className="absolute top-[10px] right-[7px]" width="6" height="4" aria-hidden="true">
            <path d="M0 0h6L3 3z" fill="#fff" />
          </svg>
        </div>
        <FilterBar />
        <MapList />
      </div>
      <div className="flex w-[11px] flex-col justify-center bg-[#333337]">
        <button aria-label="Collapse panel" className="flex h-[54px] items-center border border-[#5a5a5e] bg-[#232325]">
          <svg width="9" height="16" viewBox="0 0 9 16" aria-hidden="true">
            <path d="M9 0v16L1 8z" fill="#0f86dc" />
          </svg>
        </button>
      </div>
      <div className="w-[6px] bg-[#2d2d30]" />
    </div>
  </aside>
);

const isHigh = (value: number) => value >= 16000;
const isHighColumn = (value: number) => value >= 8000;

const DataGrid = () => (
  <table className="w-full table-fixed border-separate border-spacing-0 text-right font-[Liberation_Mono,monospace] text-[17px] leading-[18px] text-[#a9a9a9]">
    <colgroup>
      <col className="w-[76px]" />
      <col className="w-11" />
      {X_AXIS.slice(1).map((x) => (
        <col key={x} className="w-[60px]" />
      ))}
      <col />
    </colgroup>
    <thead className="*:*:font-normal">
      <tr className="h-[19px] align-top">
        <td className="border-r-3 border-double border-[#d0d0d0]" />
        <th colSpan={12} className="text-center font-[Open_Sans,sans-serif] text-xs leading-[14px]">
          -(-,-)/-
        </th>
      </tr>
      {[0, 1].map((line) => (
        <tr key={line} className={line === 0 ? 'h-[18px]' : 'h-[28px] align-top *:border-b-3'}>
          <th
            className={clsx(
              'border-r-3 border-double border-[#d0d0d0]',
              line === 0 ? 'pr-3' : 'text-left',
            )}
          >
            –
          </th>
          {X_AXIS.map((x, i) => (
            <th
              key={x}
              scope="col"
              className={clsx('relative border-double border-[#d0d0d0]', isHighColumn(x) && 'text-[#b96c70]')}
            >
              {i % 2 === line && x}
              {line === 1 && i === CURSOR_COLUMN && (
                <div className="absolute right-0 -bottom-[5px] h-[7px] w-[50px] border-y-2 border-white" />
              )}
            </th>
          ))}
          <th className="border-double border-[#d0d0d0]" />
        </tr>
      ))}
    </thead>
    <tbody>
      <tr className="h-2">
        <td className="border-r-3 border-double border-[#d0d0d0]" />
      </tr>
      {DIFF.map((row, r) => (
        <tr key={Y_AXIS[r]} className="h-[18px]">
          <th
            scope="row"
            className={clsx(
              'relative border-r-3 border-double border-[#d0d0d0] pr-3 font-normal',
              isHigh(Y_AXIS[r]) && 'text-[#b96c70]',
            )}
          >
            {Y_AXIS[r]}
            {r === CURSOR_ROW && (
              <div className="absolute -top-px -right-[5px] h-[18px] w-[7px] border-x-2 border-white" />
            )}
          </th>
          {row.map((value, c) => (
            <td key={c} className={clsx(value !== '0.0' && 'text-[#bb7579]')}>
              {value}
            </td>
          ))}
        </tr>
      ))}
    </tbody>
  </table>
);

const MapWindow = () => (
  <main className="flex min-w-0 flex-1 flex-col border-t-2 border-l-2 border-[#8a8a8c] bg-[#3e3e42]">
    <div className="flex min-h-0 flex-1 border-r-2 border-b-2 border-r-[#e8e8e8] border-b-white">
      <div className="flex min-w-0 flex-1 flex-col">
        <div className="min-h-0 flex-1 overflow-hidden bg-black">
          <DataGrid />
        </div>
        <div className="flex h-4 shrink-0 text-[#e0e0e0]">
          <div className="flex w-[123px] items-center gap-[18px] bg-black pl-[7px]">
            <button>
              <span className="underline">T</span>ext
            </button>
            <div className="flex gap-[13px]">
              <button>2d</button>
              <button>3d</button>
              <button aria-label="Tabs">
                <Icon size={10} box={10}>
                  <path d="M0 3.500h10M0 5.500h10" stroke="#d0d0d0" />
                </Icon>
              </button>
            </div>
          </div>
          <div className="flex flex-1 items-center justify-between px-1">
            <svg width="8" height="10" aria-hidden="true">
              <path d="M6 1v8L2 5z" fill="#97979a" />
            </svg>
            <div className="mr-[2px] ml-auto h-2 w-[77%] bg-[#bcbcbc]" />
            <svg width="8" height="10" aria-hidden="true">
              <path d="M2 1v8l4-4z" fill="#97979a" />
            </svg>
          </div>
        </div>
      </div>
      <div className="w-4 shrink-0 bg-[#3e3e42]" />
    </div>
  </main>
);

const StatusBar = () => (
  <footer className="flex h-[22px] shrink-0 items-center bg-[#007acc] pt-px pr-[22px] pl-1 text-[#d3edff]">
    <span>Press F1 to receive help.</span>
    <div className="ml-auto flex items-center gap-[10px] pr-[14px]">
      <Icon size={12} box={12}>
        <path d="M1 1h9M1 1l5 5-5 5h9M2 1l5 5" stroke="#5f8ba8" />
      </Icon>
      <Icon size={12} box={12} smooth>
        <circle cx="6" cy="6" r="4" stroke="#5f8ba8" strokeWidth="3" strokeDasharray="3 1" />
      </Icon>
      <Icon size={12} box={12} smooth>
        <path d="M4 2L1 6l3 4M8 2l3 4-3 4M4 6h4" stroke="#4784ae" />
      </Icon>
    </div>
    <span className="w-[91px]">No CS</span>
    <span className="w-[106px]">Cursor: EA87C =&gt;</span>
    <span className="w-[62px] whitespace-pre">0 (   0) -&gt;</span>
    <span>0 (0.00%), Width: 24</span>
  </footer>
);

const ExplorerFolder = () => (
  <Icon size={24} box={24} smooth>
    <path d="M6 2h9l3 3v15H6z" fill="#f0c95a" />
    <path d="M6 3l5 2v17l-5-3z" fill="#fbe39a" />
  </Icon>
);

const ChromeIcon = () => (
  <Icon size={24} box={24} smooth>
    <circle cx="12" cy="12" r="11" fill="#f6c52a" />
    <path d="M12 1a11 11 0 0 0-9.500 5.500L7.700 14.500A5 5 0 0 1 12 7h9.800A11 11 0 0 0 12 1z" fill="#dd4335" />
    <path d="M2.500 6.500A11 11 0 0 0 12 23l4.300-8.500a5 5 0 0 1-8.600 0z" fill="#1f9d57" />
    <circle cx="12" cy="12" r="5.500" fill="#fff" />
    <circle cx="12" cy="12" r="4.300" fill="#3b79e8" />
  </Icon>
);

const TASKS = [
  { label: '(1) Facebook - Goo...', icon: <ChromeIcon /> },
  { label: 'WinOLS5 - Map "B...', icon: <WinOlsIcon size={24} />, state: 'active' },
  { label: 'VW T5', icon: <ExplorerFolder /> },
  {
    label: 'Downloads',
    icon: (
      <Icon size={24} box={24} smooth>
        <path d="M8 2h9v9h4l-8.500 11L4 11h4z" fill="#3a95e4" />
      </Icon>
    ),
  },
  { label: 'BMW 3.0d 231hp Z...', icon: <ExplorerFolder /> },
  {
    label: '2 - Paint',
    state: 'open',
    icon: (
      <Icon size={24} box={24} smooth>
        <path d="M11 4C4 4 1 9 1 14s4 9 9 8c3-1 1-4 3-5s7 0 8-4c0-6-5-9-10-9z" fill="#dfe8ec" />
        <circle cx="6" cy="11" r="2" fill="#d8524a" />
        <circle cx="10" cy="8" r="2" fill="#f0b83c" />
        <circle cx="5" cy="16" r="2" fill="#4b9cd8" />
        <circle cx="15" cy="12" r="2" fill="#58a85c" />
        <path d="M14 14l5-11" stroke="#c89058" strokeWidth="3" />
        <path d="M18 5l2-4" stroke="#f0dcc0" strokeWidth="4" />
      </Icon>
    ),
  },
];

const Taskbar = () => (
  <div className="flex h-10 shrink-0 items-center bg-[#1e2021] text-xs text-[#f0f0f0]">
    <button aria-label="Start" className="flex w-12 justify-center">
      <Icon smooth>
        <path d="M0 2.300L6.500 1.400v6.100H0zM7.500 1.300L16 0v7.500H7.500zM0 8.500h6.500v6.100L0 13.700zM7.500 8.500H16V16l-8.500-1.200z" fill="#fff" />
      </Icon>
    </button>
    <label className="flex h-full w-[344px] items-center gap-3 bg-[#f2f2f2] pl-3">
      <Icon size={17} box={17} smooth>
        <circle cx="10.500" cy="6.500" r="5.500" stroke="#222" strokeWidth="1.300" />
        <path d="M6.500 10.500L1 16" stroke="#222" strokeWidth="1.300" />
      </Icon>
      <input
        type="text"
        aria-label="Search"
        placeholder="Type here to search"
        className="min-w-0 flex-1 pt-px text-sm placeholder:text-[#404040]"
      />
    </label>
    <button aria-label="Task view" className="flex w-12 justify-center">
      <Icon size={17} box={17}>
        <path d="M1 1.500h10M1 15.500h10M1.500 0v3M10.500 0v3M1.500 14v3M10.500 14v3M1.500 5.500h9v6h-9zM14.500 1v3M14.500 10v6" stroke="#f0f0f0" />
        <rect x="13" y="5" width="3" height="3" fill="#f0f0f0" />
      </Icon>
    </button>
    <button aria-label="This PC" className="flex w-[54px] justify-center">
      <Icon size={24} box={24} smooth>
        <path d="M7 2l15 4-2 11L8 14z" fill="#52b0ee" />
        <path d="M7 2l15 4-1 4L8 9z" fill="#7cc6f6" />
        <path d="M1 18l9-3 9 3-8 5z" fill="#e4e8ea" />
      </Icon>
    </button>
    <button aria-label="VMware" className="flex w-11 justify-center">
      <Icon size={26} box={26} smooth>
        <rect x="10" y="3" width="13" height="14" rx="3" stroke="#1c8fc4" strokeWidth="4" />
        <rect x="3" y="9" width="13" height="14" rx="3" stroke="#f0921e" strokeWidth="4" />
        <path d="M10 12V6" stroke="#1c8fc4" strokeWidth="4" />
      </Icon>
    </button>
    <div className="ml-1 flex h-full">
      {TASKS.map((task) => (
        <button
          key={task.label}
          className={clsx(
            'flex h-full w-40 flex-col',
            task.state === 'active' && 'bg-[#4b4c4d]',
            task.state === 'open' && 'bg-[#353636]',
          )}
        >
          <span className="flex flex-1 items-center gap-1 pt-[2px] pl-[9px] whitespace-nowrap">
            {task.icon}
            {task.label}
          </span>
          <span className={clsx('h-[2px] bg-[#86b4dc]', task.state ? 'w-full' : 'ml-1 w-[152px]')} />
        </button>
      ))}
    </div>
    <div className="ml-auto flex h-full items-center">
      <button aria-label="Show hidden icons" className="mr-[10px]">
        <Icon size={12} box={12} smooth>
          <path d="M1 9l5-5 5 5" stroke="#f0f0f0" strokeWidth="1.300" />
        </Icon>
      </button>
      <div className="mr-[10px] flex gap-2">
        <Icon smooth>
          <path d="M5 5.500h10v7H5M6 7.500h6v3H6z" stroke="#f0f0f0" />
          <path d="M7 7h5v4H7z" fill="#f0f0f0" />
          <path d="M1 3v3h4V3M2 1v2M4 1v2M3 6v4" stroke="#f0f0f0" />
        </Icon>
        <Icon smooth>
          <path d="M2 15C2 8 8 3 15 3M5 15c0-5 4-9 10-9M8 15c0-4 3-6 7-6" stroke="#d8d8d8" />
          <path d="M11 15c0-2 2-3 4-3v3z" fill="#fff" />
        </Icon>
        <Icon smooth>
          <path d="M1 6h2l4-4v12l-4-4H1z" stroke="#f0f0f0" />
          <path d="M9 6c1 1 1 3 0 4" stroke="#f0f0f0" />
          <path d="M11 4c2 2 2 6 0 8M13 2c3 3 3 9 0 12" stroke="#8a8a8a" />
        </Icon>
      </div>
      <span>ENG</span>
      <div className="w-[84px] text-center leading-[18px]">
        17:13
        <br />
        25/06/2025
      </div>
      <button aria-label="Notifications" className="mr-[18px] ml-1">
        <Icon size={18} box={18} smooth>
          <path d="M1.500 2.500h15v11h-5L9 16.500l-2.500-3h-5z" stroke="#f0f0f0" strokeWidth="1.300" />
        </Icon>
      </button>
      <div className="mr-1 h-full w-px bg-[#5a5a5a]" />
    </div>
  </div>
);

const App = () => {
  return (
    <div className="relative flex h-screen flex-col overflow-hidden bg-[#2d2d30] font-[Open_Sans,sans-serif] text-[11px]">
      <TitleBar />
      <MenuBar />
      <Toolbars />
      <Tooltip />
      <div className="flex min-h-0 flex-1 pr-px">
        <MapSelection />
        <MapWindow />
      </div>
      <StatusBar />
      <Taskbar />
    </div>
  );
};

export default App;
